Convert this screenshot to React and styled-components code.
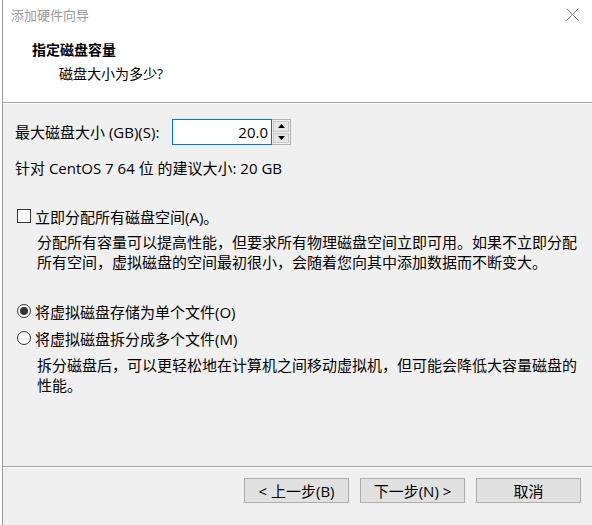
import React from 'react';
import styled, { createGlobalStyle } from 'styled-components';

const GlobalStyle = createGlobalStyle`
  html, body {
    margin: 0;
    padding: 0;
    background: #ffffff;
  }
  body {
    font-family: "Open Sans", "Noto Sans CJK SC", sans-serif;
    color: #000;
  }
`;

const Outer = styled.div`
  width: 592px;
  height: 525px;
  padding-left: 2px;
  box-sizing: border-box;
  background: #fff;
  overflow: hidden;
`;

const Frame = styled.div`
  height: 100%;
  border-left: 1px solid #9a9a9a;
  display: flex;
  flex-direction: column;
  background: #f0f0f0;
`;

const TitleBar = styled.div`
  height: 28px;
  background: #fff;
  display: flex;
  align-items: center;
  justify-content: space-between;
  padding: 0 13px 0 8px;
`;

const TitleText = styled.span`
  font-size: 13px;
  color: #9a9a9a;
`;

const Header = styled.div`
  height: 75px;
  background: #fff;
  padding: 11px 0 0 29px;
  box-sizing: border-box;
  border-bottom: 1px solid #a0a0a0;
`;

const HeaderTitle = styled.div`
  font-size: 14px;
  font-weight: bold;
  line-height: 22px;
`;

const HeaderSub = styled.div`
  font-size: 14px;
  line-height: 22px;
  margin-left: 27px;
  margin-top: 2px;
`;

const Body = styled.div`
  flex: 1;
  border-top: 1px solid #fff;
  padding: 15px 0 0 12px;
  font-size: 15px;
`;

const SizeRow = styled.div`
  display: flex;
  align-items: center;
  height: 26px;
`;

const Label = styled.span`
  line-height: 20px;
  width: 157px;
  white-space: nowrap;
`;

const Spin = styled.div`
  display: flex;
  height: 26px;
`;

const NumInput = styled.div`
  width: 100px;
  height: 26px;
  box-sizing: border-box;
  border: 1px solid #0078d7;
  background: #fff;
  text-align: right;
  padding-right: 3px;
  line-height: 24px;
`;

const SpinButtons = styled.div`
  width: 19px;
  display: flex;
  flex-direction: column;
  border: 1px solid #b4b4b4;
  border-left: none;
  box-sizing: border-box;
  background: #f0f0f0;
  padding: 1px;
  gap: 1px;
`;

const SpinBtn = styled.div`
  flex: 1;
  background: #e5e5e5;
  border: 1px solid #c8c8c8;
  display: flex;
  align-items: center;
  justify-content: center;
`;

const Line = styled.div`
  line-height: 20px;
  margin-top: ${p => p.$mt || 0}px;
`;

const OptionRow = styled.div`
  display: flex;
  align-items: center;
  height: 20px;
  margin-top: ${p => p.$mt || 0}px;
  margin-left: 2px;
`;

const Box = styled.span`
  width: 14px;
  height: 14px;
  box-sizing: border-box;
  border: 1px solid #333;
  background: #fff;
  margin-right: 4px;
`;

const Radio = styled.span`
  width: 14px;
  height: 14px;
  box-sizing: border-box;
  border: 1px solid #333;
  border-radius: 50%;
  background: #fff;
  margin-right: 4px;
  display: flex;
  align-items: center;
  justify-content: center;
  &::after {
    content: '';
    width: 8px;
    height: 8px;
    border-radius: 50%;
    background: ${p => (p.$on ? '#333' : 'transparent')};
  }
`;

const Para = styled.div`
  margin: ${p => p.$mt ?? 7}px 0 0 22px;
  width: 545px;
  line-height: 20px;
`;

const Footer = styled.div`
  height: 47px;
  border-top: 1px solid #a0a0a0;
  box-shadow: inset 0 1px 0 #fff;
  display: flex;
  justify-content: flex-end;
  align-items: flex-start;
  padding: 11px 11px 0 0;
  gap: 11px;
`;

const Button = styled.div`
  width: 105px;
  height: 25px;
  box-sizing: border-box;
  border: 1px solid #adadad;
  background: #e1e1e1;
  font-size: 15px;
  display: flex;
  align-items: center;
  justify-content: center;
`;

const Arrow = ({ down }) => (
  <svg width="7" height="4" viewBox="0 0 7 4">
    <path d={down ? 'M0 0 H7 L3.5 4 Z' : 'M0 4 H7 L3.5 0 Z'} fill="#000" />
  </svg>
);

export default function App() {
  return (
    <>
      <GlobalStyle />
      <Outer>
        <Frame>
          <TitleBar>
            <TitleText>添加硬件向导</TitleText>
            <svg width="13" height="13" viewBox="0 0 13 13">
              <path d="M0.5 0.5 L12.5 12.5 M12.5 0.5 L0.5 12.5" stroke="#8a8a8a" strokeWidth="1" />
            </svg>
          </TitleBar>
          <Header>
            <HeaderTitle>指定磁盘容量</HeaderTitle>
            <HeaderSub>磁盘大小为多少?</HeaderSub>
          </Header>
          <Body>
            <SizeRow>
              <Label>最大磁盘大小 (GB)(S):</Label>
              <Spin>
                <NumInput>20.0</NumInput>
                <SpinButtons>
                  <SpinBtn><Arrow /></SpinBtn>
                  <SpinBtn><Arrow down /></SpinBtn>
                </SpinButtons>
              </Spin>
            </SizeRow>
            <Line $mt={13}>针对 CentOS 7 64 位 的建议大小: 20 GB</Line>

            <OptionRow $mt={28}>
              <Box />
              <span>立即分配所有磁盘空间(A)。</span>
            </OptionRow>
            <Para $mt={6}>
              分配所有容量可以提高性能，但要求所有物理磁盘空间立即可用。如果不立即分配所有空间，虚拟磁盘的空间最初很小，会随着您向其中添加数据而不断变大。
            </Para>

            <OptionRow $mt={29}>
              <Radio $on />
              <span>将虚拟磁盘存储为单个文件(O)</span>
            </OptionRow>
            <OptionRow $mt={7}>
              <Radio />
              <span>将虚拟磁盘拆分成多个文件(M)</span>
            </OptionRow>
            <Para>
              拆分磁盘后，可以更轻松地在计算机之间移动虚拟机，但可能会降低大容量磁盘的性能。
            </Para>
          </Body>
          <Footer>
            <Button>&lt; 上一步(B)</Button>
            <Button>下一步(N) &gt;</Button>
            <Button>取消</Button>
          </Footer>
        </Frame>
      </Outer>
    </>
  );
}
